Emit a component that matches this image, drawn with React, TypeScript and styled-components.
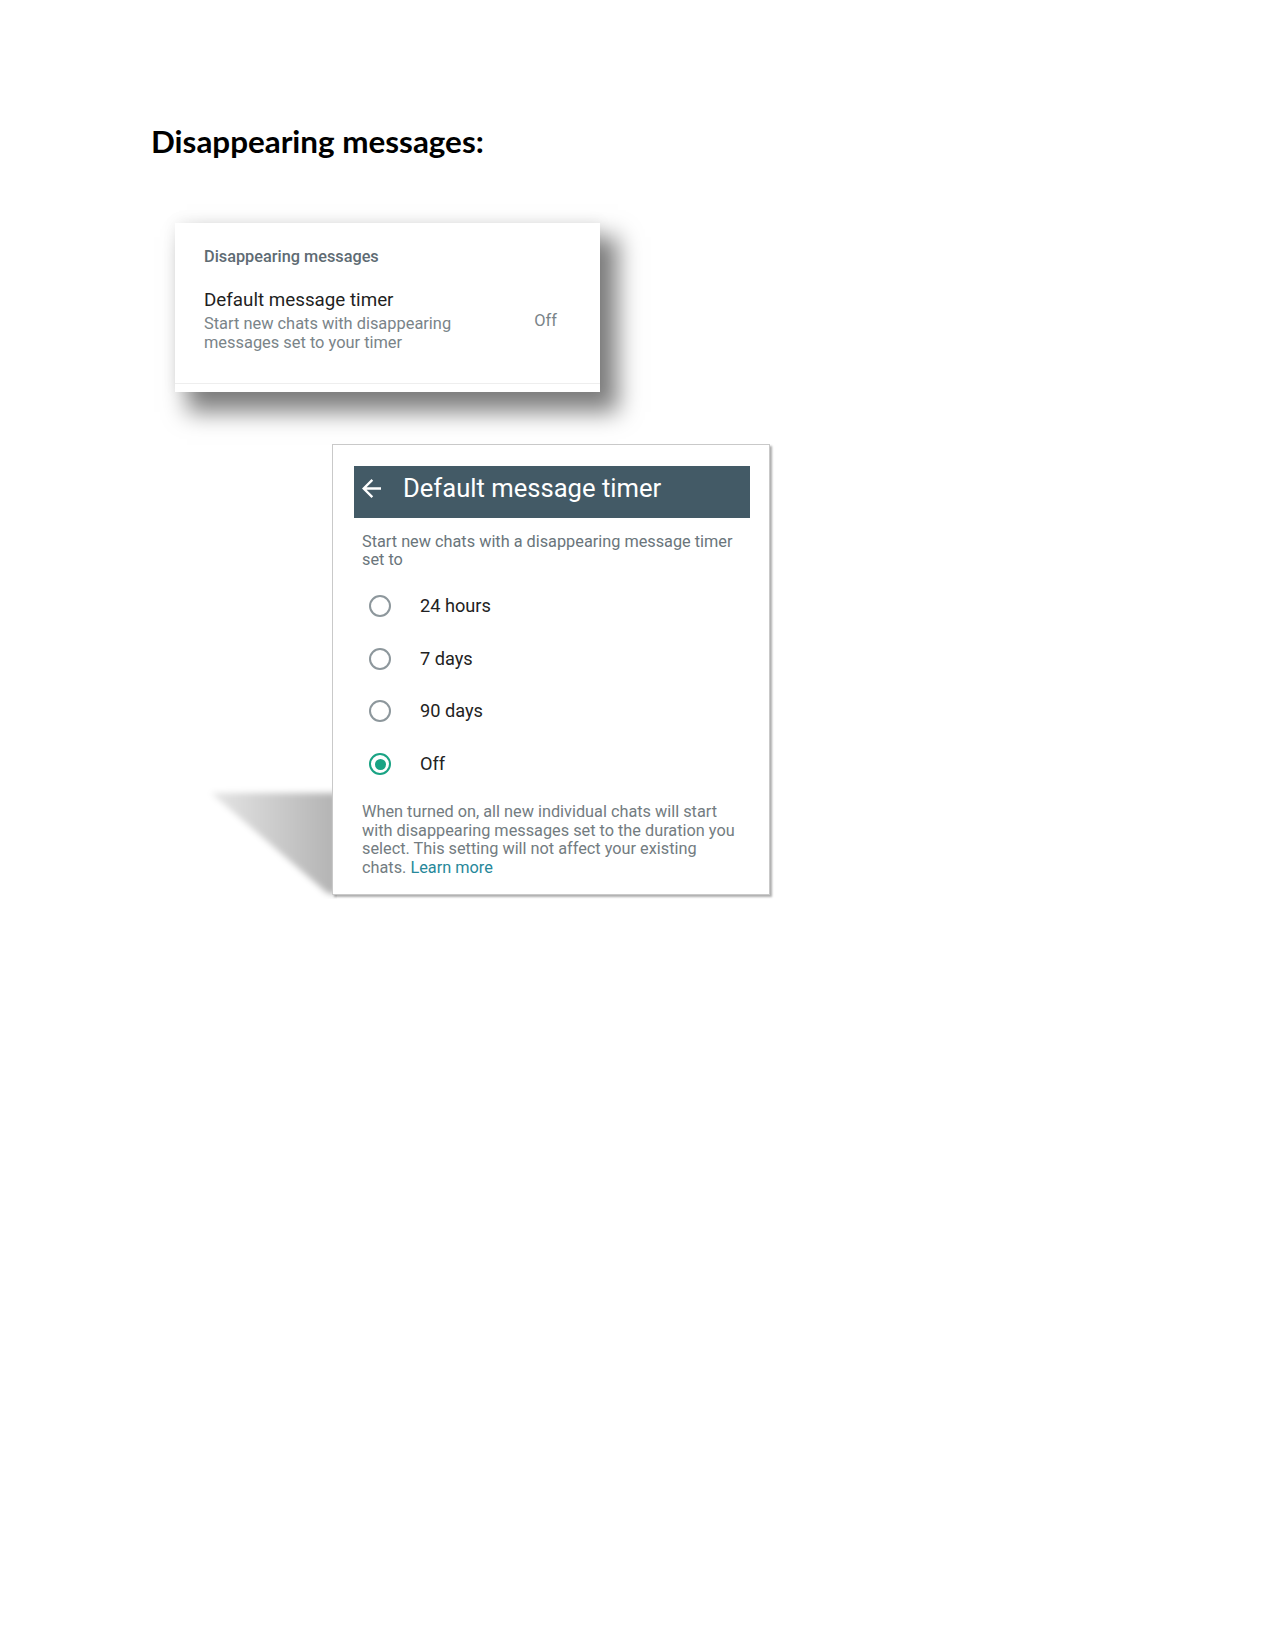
import React from "react";
import styled, { createGlobalStyle } from "styled-components";

const GlobalStyle = createGlobalStyle`
  html, body {
    margin: 0;
    padding: 0;
    background: #ffffff;
  }
  body {
    font-family: Roboto, "Noto Sans", Arial, sans-serif;
    -webkit-font-smoothing: antialiased;
  }
  * { box-sizing: border-box; }
`;

const Page = styled.main`
  width: 1275px;
  min-height: 1650px;
  padding: 122px 0 0 151px;
  display: flex;
  flex-direction: column;
  align-items: flex-start;
`;

const Title = styled.h1`
  margin: 0;
  font-family: Lato, "Open Sans", sans-serif;
  font-weight: 700;
  font-size: 31.4px;
  line-height: 38px;
  color: #000000;
`;

/* ---------- first screenshot: the settings card ---------- */

const SettingsCard = styled.section`
  margin: 63px 0 0 24px;
  width: 425px;
  background: #ffffff;
  padding: 24px 0 8px 29px;
  box-shadow: 0 -2px 14px rgba(0, 0, 0, 0.06), 15px 17px 22px 3px rgba(0, 0, 0, 0.5);
  display: flex;
  flex-direction: column;
`;

const SectionLabel = styled.div`
  font-size: 16.3px;
  font-weight: 500;
  line-height: 20px;
  color: #5e6b73;
`;

const SettingRow = styled.div`
  margin-top: 22px;
  display: flex;
  align-items: center;
  justify-content: space-between;
  padding-right: 43px;
`;

const SettingText = styled.div`
  width: 280px;
  display: flex;
  flex-direction: column;
  gap: 3px;
`;

const SettingTitle = styled.div`
  font-size: 18.8px;
  line-height: 22px;
  color: #1f1f1f;
`;

const SettingDesc = styled.div`
  font-size: 16.4px;
  line-height: 19px;
  color: #7a8489;
`;

const SettingValue = styled.div`
  font-size: 16.4px;
  line-height: 19px;
  color: #7a8489;
`;

const Divider = styled.hr`
  margin: 31px 0 0 -29px;
  border: none;
  height: 1px;
  background: #eeeeee;
`;

/* ---------- second screenshot: the timer dialog ---------- */

const DialogWrap = styled.div`
  position: relative;
  margin: 52px 0 0 181px;
`;

const CastShadow = styled.svg`
  position: absolute;
  left: -127px;
  top: 341px;
  width: 132px;
  height: 114px;
  z-index: 0;
`;

const PhoneFrame = styled.section`
  position: relative;
  z-index: 1;
  width: 438px;
  background: #ffffff;
  border: 1px solid #c9c9c9;
  box-shadow: 2px 2px 2px rgba(0, 0, 0, 0.32);
  padding: 21px 19px 17px 21px;
  display: flex;
  flex-direction: column;
`;

const AppBar = styled.header`
  height: 52px;
  background: #435a66;
  display: flex;
  align-items: center;
  gap: 22px;
  padding: 0 0 8px 8px;
`;

const BackIcon = styled.svg`
  width: 19px;
  height: 19px;
  flex: none;
  fill: #ffffff;
`;

const AppBarTitle = styled.h2`
  margin: 0;
  font-size: 25.6px;
  font-weight: 400;
  line-height: 28px;
  color: #ffffff;
`;

const Intro = styled.p`
  margin: 14.5px 0 0;
  padding-left: 8px;
  font-size: 16.3px;
  line-height: 18px;
  color: #6a757b;
`;

const RadioList = styled.div`
  margin-top: 11.5px;
  display: flex;
  flex-direction: column;
`;

const RadioRow = styled.label`
  height: 52.6px;
  display: flex;
  align-items: center;
  gap: 29px;
  padding-left: 15px;
`;

const RadioCircle = styled.span<{ $checked: boolean }>`
  width: 22px;
  height: 22px;
  flex: none;
  border-radius: 50%;
  border: 2px solid ${(p) => (p.$checked ? "#19a384" : "#8d979c")};
  display: flex;
  align-items: center;
  justify-content: center;
  &::after {
    content: "";
    width: 11px;
    height: 11px;
    border-radius: 50%;
    background: ${(p) => (p.$checked ? "#19a384" : "transparent")};
  }
`;

const RadioLabel = styled.span`
  font-size: 18.2px;
  line-height: 22px;
  color: #222222;
`;

const Footnote = styled.p`
  margin: 13px 0 0;
  padding: 0 15px 0 8px;
  font-size: 16.3px;
  line-height: 18.5px;
  color: #737c81;
`;

const LearnMore = styled.a`
  color: #27889a;
  text-decoration: none;
`;

const options = [
  { label: "24 hours", checked: false },
  { label: "7 days", checked: false },
  { label: "90 days", checked: false },
  { label: "Off", checked: true },
];

export default function App() {
  return (
    <>
      <GlobalStyle />
      <Page>
        <Title>Disappearing messages:</Title>

        <SettingsCard>
          <SectionLabel>Disappearing messages</SectionLabel>
          <SettingRow>
            <SettingText>
              <SettingTitle>Default message timer</SettingTitle>
              <SettingDesc>Start new chats with disappearing messages set to your timer</SettingDesc>
            </SettingText>
            <SettingValue>Off</SettingValue>
          </SettingRow>
          <Divider />
        </SettingsCard>

        <DialogWrap>
          <CastShadow viewBox="0 0 132 114" aria-hidden="true">
            <defs>
              <linearGradient id="castGrad" x1="0" y1="0" x2="1" y2="0">
                <stop offset="0" stopColor="#000" stopOpacity="0.1" />
                <stop offset="1" stopColor="#000" stopOpacity="0.3" />
              </linearGradient>
              <filter id="castBlur" x="-20%" y="-20%" width="140%" height="140%">
                <feGaussianBlur stdDeviation="3" />
              </filter>
            </defs>
            <polygon points="6,8 132,8 132,110 122,108" fill="url(#castGrad)" filter="url(#castBlur)" />
          </CastShadow>

          <PhoneFrame>
            <AppBar>
              <BackIcon viewBox="4 4 16 16" aria-hidden="true">
                <path d="M20 11H7.83l5.59-5.59L12 4l-8 8 8 8 1.41-1.41L7.83 13H20v-2z" />
              </BackIcon>
              <AppBarTitle>Default message timer</AppBarTitle>
            </AppBar>

            <Intro>Start new chats with a disappearing message timer set to</Intro>

            <RadioList>
              {options.map((o) => (
                <RadioRow key={o.label}>
                  <RadioCircle $checked={o.checked} />
                  <RadioLabel>{o.label}</RadioLabel>
                </RadioRow>
              ))}
            </RadioList>

            <Footnote>
              When turned on, all new individual chats will start with disappearing messages set to the
              duration you select. This setting will not affect your existing chats.{" "}
              <LearnMore href="#">Learn more</LearnMore>
            </Footnote>
          </PhoneFrame>
        </DialogWrap>
      </Page>
    </>
  );
}
